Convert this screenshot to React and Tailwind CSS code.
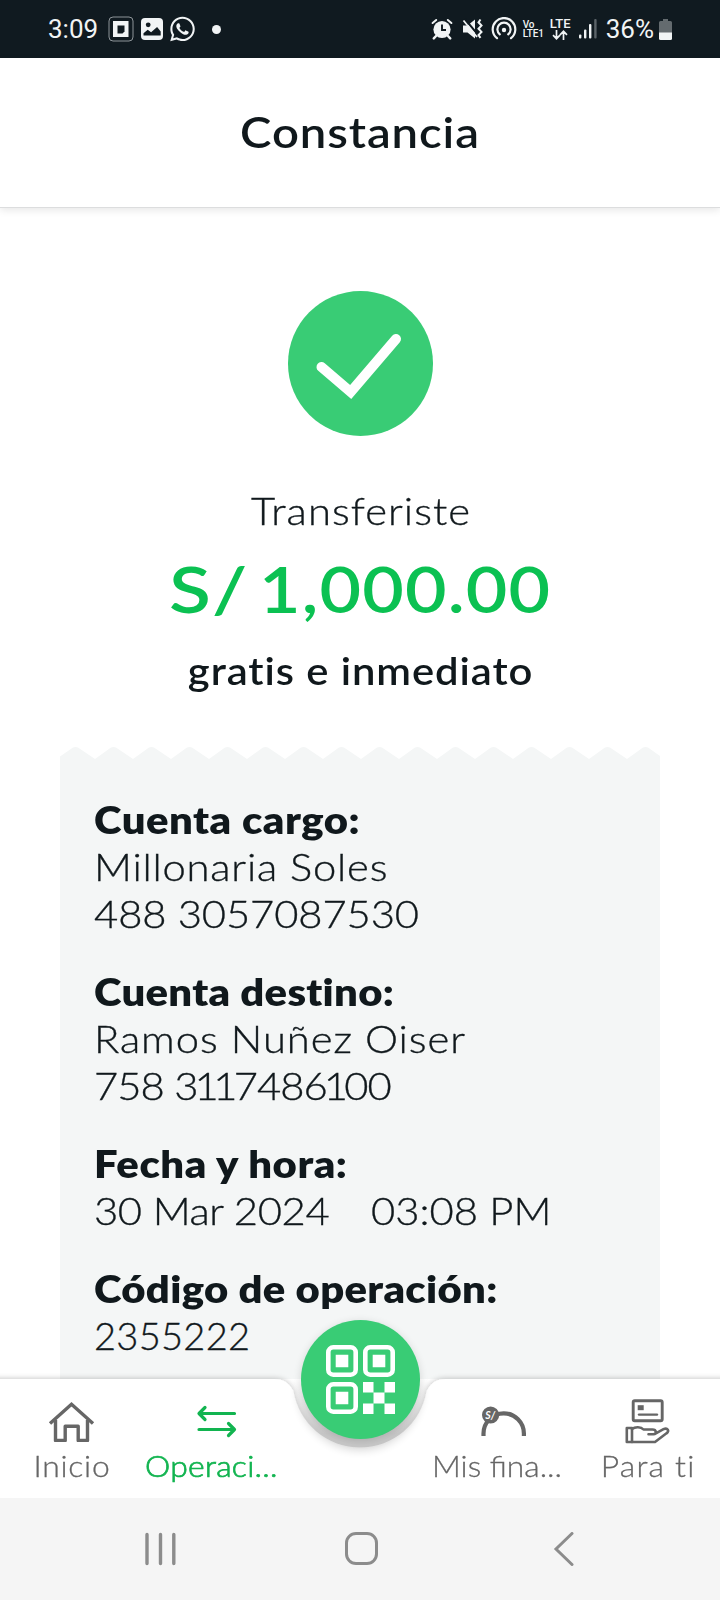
import React from 'react'
import { FaWhatsapp } from 'react-icons/fa'

const light = 'font-light text-[38px] [-webkit-text-stroke:0.35px] whitespace-pre'
const bold = 'font-extrabold text-[38px] leading-[48px] whitespace-pre origin-left scale-x-[1.1]'
const wide = 'origin-left scale-x-[1.1] leading-[47px]'

function StatusBar() {
  return (
    <div className="flex h-[58px] shrink-0 items-center bg-[#101a20] pl-[48px] pr-[48px] font-['Roboto',sans-serif] text-[#f1f4f5]">
      <span className="w-[60px] text-[26px] leading-none">3:09</span>
      <svg className="h-[26px] w-[26px]" viewBox="0 0 26 26" fill="none">
        <rect x="1" y="1" width="24" height="24" rx="4" stroke="#8d9498" strokeWidth="1" />
        <rect x="5" y="5" width="15.5" height="16" fill="#f1f4f5" />
        <path d="M9.5 9.5h7v6l-2 2h-5z" fill="#101a20" />
      </svg>
      <svg className="ml-[7px] h-[22px] w-[22px]" viewBox="0 0 22 22">
        <rect width="22" height="22" rx="4" fill="#f1f4f5" />
        <circle cx="7.2" cy="6.8" r="2.4" fill="#101a20" />
        <path d="M2.5 17.5v-2.2l4.2-3.6 3.4 2.6 6-5.3 3.6 4.5v4z" fill="#101a20" />
      </svg>
      <FaWhatsapp className="ml-[6px] h-[28px] w-[27px]" />
      <span className="ml-[16px] h-[9px] w-[9px] rounded-full bg-[#f1f4f5]" />
      <div className="ml-auto flex items-center">
        <svg className="h-[22px] w-[22px]" viewBox="0 0 22 22" fill="none" stroke="#f1f4f5" strokeLinecap="round">
          <circle cx="11" cy="11.5" r="8.6" fill="#f1f4f5" stroke="none" />
          <path d="M1.6 5L5.2 2M20.4 5L16.8 2" strokeWidth="2" />
          <path d="M5 18l-2.2 2.4M17 18l2.2 2.4" strokeWidth="2.4" />
          <path d="M11 6.5v5.5h4" stroke="#101a20" strokeWidth="1.9" strokeLinecap="butt" />
        </svg>
        <svg className="ml-[9px] h-[22px] w-[22px]" viewBox="0 0 22 22" fill="none">
          <path d="M1 7.5h4.5L13 1.5v19l-7.5-6H1z" fill="#f1f4f5" />
          <path d="M2.500 0.500L17 18" stroke="#101a20" strokeWidth="2" />
          <path d="M1.5 2.5L15 19" stroke="#f1f4f5" strokeWidth="1.8" />
          <path d="M18.5 1.5l-2 2.8 3 3.2-3 3.2 3 3.2-3 3.2 2 2.8" stroke="#f1f4f5" strokeWidth="2" />
        </svg>
        <svg className="ml-[7px] h-[24px] w-[26px]" viewBox="0 0 26 24" fill="none" stroke="#f1f4f5" strokeWidth="2.2" strokeLinecap="round">
          <path d="M6 21.2a11.3 11.3 0 1 1 14 0" />
          <path d="M8.8 17.4a6.6 6.6 0 1 1 8.4 0" />
          <circle cx="13" cy="13" r="2.2" fill="#f1f4f5" stroke="none" />
        </svg>
        <div className="ml-[6px] flex w-[22px] flex-col text-[10px] font-medium leading-[9px] tracking-[-0.1px]">
          <span>Vo</span>
          <span>LTE1</span>
        </div>
        <div className="ml-[4px] flex w-[23px] flex-col items-center">
          <span className="text-[13px] font-medium leading-[12px]">LTE</span>
          <svg className="h-[10px] w-[16px]" viewBox="0 0 16 10" fill="none" stroke="#f1f4f5" strokeWidth="1.7">
            <path d="M4.5 0v8.5M1 5.2l3.5 3.5L8 5.2M11.5 10V1.5M8 4.8l3.5-3.5L15 4.8" />
          </svg>
        </div>
        <svg className="ml-[7px] h-[20px] w-[18px]" viewBox="0 0 18 20" fill="#f1f4f5">
          <rect x="0" y="15.5" width="2.4" height="4" rx="1" />
          <rect x="5" y="10.5" width="2.4" height="9" rx="1" />
          <rect x="10" y="5" width="2.4" height="14.5" rx="1" />
          <rect x="15.2" y="0" width="2.4" height="19.5" rx="1" fill="#5b6368" />
        </svg>
        <span className="ml-[9px] text-[26px] leading-none">36%</span>
        <svg className="ml-[5px] h-[21px] w-[13px]" viewBox="0 0 13 21">
          <path d="M4 0h5v2h2.5a1.500 1.500 0 0 1 1.500 1.500V14H0V3.500A1.500 1.500 0 0 1 1.500 2H4z" fill="#646b6f" />
          <path d="M0 13.500h13v6a1.500 1.500 0 0 1-1.500 1.500h-10A1.500 1.500 0 0 1 0 19.500z" fill="#f1f4f5" />
        </svg>
      </div>
    </div>
  )
}

function Receipt() {
  return (
    <div className="mt-[53px] ml-[60px] w-[600px] flex-1">
      <svg className="block h-[13px] w-[600px]" viewBox="0 0 600 13" fill="#f4f6f6">
        <path d="M0 13V9.500L13 0.500Q15.500 -0.500 18 0.500L35 12L51 0.500Q53.500 -0.500 56 0.500L73 12L89 0.500Q91.500 -0.500 94 0.500L111 12L127 0.500Q129.500 -0.500 132 0.500L149 12L165 0.500Q167.500 -0.500 170 0.500L187 12L203 0.500Q205.500 -0.500 208 0.500L225 12L241 0.500Q243.500 -0.500 246 0.500L263 12L279 0.500Q281.500 -0.500 284 0.500L301 12L317 0.500Q319.500 -0.500 322 0.500L339 12L355 0.500Q357.500 -0.500 360 0.500L377 12L393 0.500Q395.500 -0.500 398 0.500L415 12L431 0.500Q433.500 -0.500 436 0.500L453 12L469 0.500Q471.500 -0.500 474 0.500L491 12L507 0.500Q509.500 -0.500 512 0.500L529 12L545 0.500Q547.500 -0.500 550 0.500L567 12L583 0.500Q585.500 -0.500 588 0.500L600 9V13Z" />
      </svg>
      <div className="flex h-full flex-col gap-[30px] bg-[#f4f6f6] pl-[34px] pt-[35px]">
        <div className="flex flex-col items-start">
          <span className={`${bold} tracking-[0.46px]`}>Cuenta cargo:</span>
          <span className={`${light} ${wide} tracking-[0.7px]`}>Millonaria Soles</span>
          <span className={`${light} ${wide} tracking-[-0.1px]`}>488 3057087530</span>
        </div>
        <div className="flex flex-col items-start">
          <span className={`${bold} tracking-[0.25px]`}>Cuenta destino:</span>
          <span className={`${light} ${wide} tracking-[0.82px]`}>Ramos Nuñez Oiser</span>
          <span className={`${light} ${wide} tracking-[-0.9px]`}>
            758 <span className="tracking-[-3.5px]">3</span><span className="tracking-[-5px]">1</span><span className="tracking-[-3.5px]">1</span>748<span className="tracking-[-3.5px]">61</span>00
          </span>
        </div>
        <div className="flex flex-col items-start">
          <span className={`${bold} tracking-[0.5px]`}>Fecha y hora:</span>
          <div className="flex">
            <div className="w-[277px]">
              <span className={`${light} ${wide} inline-block tracking-[-0.35px]`}>30 Mar 2024</span>
            </div>
            <span className={`${light} ${wide} tracking-[0px]`}>03:08 PM</span>
          </div>
        </div>
        <div className="flex flex-col items-start">
          <span className={`${bold} tracking-[0.28px]`}>Código de operación:</span>
          <span className={`${light} leading-[47px] tracking-[0.3px]`}>2355222</span>
        </div>
      </div>
    </div>
  )
}

const tabLabel = 'text-[29px] leading-[36px] whitespace-pre mt-[6px] font-light'
const barShape = 'M-20 0H274C284 0 289 4 293.4 12A67.5 67.5 0 0 0 426.600 12C431 4 436 0 446 0H740V119H-20Z'

function TabBar() {
  return (
    <div className="relative h-[119px] shrink-0">
      <svg className="absolute left-0 top-0 h-[119px] w-[720px] overflow-visible" viewBox="0 0 720 119">
        <defs>
          <linearGradient id="notch" x1="0" y1="0" x2="0" y2="1">
            <stop offset="0" stopColor="#c8c8c8" stopOpacity="0" />
            <stop offset="0.4" stopColor="#c8c8c8" stopOpacity="0.45" />
            <stop offset="0.8" stopColor="#c8c8c8" />
            <stop offset="1" stopColor="#c8c8c8" />
          </linearGradient>
          <filter id="bar-shadow" x="-5%" y="-20%" width="110%" height="140%">
            <feDropShadow dx="0" dy="-1" stdDeviation="2.500" floodColor="#000" floodOpacity="0.2" />
          </filter>
          <filter id="glow" x="-30%" y="-30%" width="160%" height="160%">
            <feGaussianBlur stdDeviation="5" />
          </filter>
          <clipPath id="bar-clip">
            <path d={barShape} />
          </clipPath>
        </defs>
        <path filter="url(#bar-shadow)" fill="#fff" d={barShape} />
        <g clipPath="url(#bar-clip)">
          <circle cx="360" cy="9" r="62" fill="#000" opacity="0.16" filter="url(#glow)" />
        </g>
        <path fill="url(#notch)" d="M274 0C284 0 289 4 293.4 12A67.5 67.5 0 0 0 426.600 12C431 4 436 0 446 0Z" />
      </svg>
      <div className="relative grid h-full grid-cols-5 bg-transparent pt-[15px] text-[#666]">
        <div className="flex flex-col items-center">
          <svg className="h-[48px] w-[48px]" viewBox="0 0 48 48" fill="none" stroke="#666" strokeWidth="3.400" strokeLinejoin="round">
            <path d="M2 29.500L23.500 10.200L45 29.500" strokeLinejoin="miter" />
            <path d="M7.500 26V46.500H17.200V32.300H30.200V46.500H39.500V26" />
          </svg>
          <span className={`${tabLabel} scale-x-[1.1] tracking-[0.65px] [-webkit-text-stroke:0.3px]`}>Inicio</span>
        </div>
        <div className="flex flex-col pl-[1px] text-[#12b450]">
          <svg className="h-[48px] w-[48px] self-center" viewBox="0 0 48 48" fill="none" stroke="#12b450" strokeWidth="3.200" strokeLinecap="round" strokeLinejoin="round">
            <path d="M41.500 19.500H6.500M12 13.500L6 19.500L12 25.500" />
            <path d="M6 35.500H41M35.500 29.500L41.500 35.500L35.500 41.500" />
          </svg>
          <span className={`${tabLabel} origin-left scale-x-[1.1] tracking-[0.25px] [-webkit-text-stroke:0.7px]`}>Operaci...</span>
        </div>
        <div />
        <div className="flex flex-col">
          <svg className="h-[48px] w-[48px] self-center" viewBox="0 0 48 48" fill="none">
            <path d="M3.500 42v-2.500A20.200 20.200 0 0 1 43.900 39.500V42" stroke="#666" strokeWidth="4.200" />
            <circle cx="10.600" cy="21" r="8.600" fill="#666" />
            <text x="5.300" y="24.800" fill="#fff" fontSize="10.500" fontWeight="700" fontStyle="italic" fontFamily="Lato, sans-serif">S/</text>
          </svg>
          <span className={`${tabLabel} origin-left scale-x-[1.095] [-webkit-text-stroke:0.3px]`}>Mis fina...</span>
        </div>
        <div className="flex flex-col items-center">
          <svg className="h-[48px] w-[48px] overflow-visible" viewBox="0 0 48 48" fill="none" stroke="#666" strokeWidth="2.900" strokeLinejoin="round" strokeLinecap="round">
            <rect x="9.200" y="6.700" width="29" height="20" rx="1.500" />
            <rect x="13.700" y="11.200" width="6" height="5" fill="#666" stroke="none" />
            <path d="M15 20.600H33" strokeWidth="2.400" />
            <path d="M2.800 34H8V48H2.800Z" strokeWidth="2.600" />
            <path d="M8 35C11 32.500 17 32.500 19.500 35.500H28.500C32.500 35.500 33 40 29.500 40.300H24.500M31 39.800L39.500 35.200C43.500 33.200 46 37 42.500 39.300L31 48H8" strokeWidth="2.600" />
          </svg>
          <span className={`${tabLabel} scale-x-[1.1] tracking-[1.1px] [-webkit-text-stroke:0.3px]`}>Para ti</span>
        </div>
      </div>
      <button className="absolute left-[301px] top-[-59px] flex h-[119px] w-[119px] items-center justify-center rounded-full bg-[#39cc75] shadow-[0_2px_8px_rgba(0,0,0,0.14)]">
        <svg className="h-[69px] w-[69px]" viewBox="0 0 69 69" fill="none" stroke="#fff" strokeWidth="4.600">
          <rect x="2.300" y="2.300" width="27.400" height="27.400" rx="5" />
          <rect x="39.300" y="2.300" width="27.400" height="27.400" rx="5" />
          <rect x="2.300" y="39.300" width="27.400" height="27.400" rx="5" />
          <path stroke="none" fill="#fff" d="M9.700 9.700h12.600v12.600H9.700zM46.700 9.700h12.600v12.600H46.700zM9.700 46.700h12.600v12.600H9.700zM37 37h10.500v10.500H37zM58.500 37H69v10.500H58.500zM47.500 47.500h11v11h-11zM37 58.500h10.500V69H37zM58.500 58.500H69V69H58.500z" />
        </svg>
      </button>
    </div>
  )
}

export default function App() {
  return (
    <div className="flex h-[1600px] w-[720px] flex-col overflow-hidden bg-white font-['Lato',sans-serif] text-[#10181c]">
      <StatusBar />
      <header className="relative flex h-[149px] shrink-0 items-center justify-center pb-[2px] shadow-[0_1px_0_#dcddde,0_3px_8px_rgba(0,0,0,0.1)]">
        <h1 className="scale-x-[1.1] text-[43px] font-semibold leading-none tracking-[0.8px]">Constancia</h1>
      </header>
      <main className="flex min-h-0 flex-1 flex-col overflow-hidden">
        <svg className="mt-[84px] ml-[1px] h-[145px] w-[145px] shrink-0 self-center" viewBox="0 0 145 145" fill="none">
          <circle cx="72.500" cy="72.500" r="72.500" fill="#39cc75" />
          <path d="M33.500 76L62.700 101L108 48" stroke="#fff" strokeWidth="10" strokeLinecap="round" strokeLinejoin="miter" />
        </svg>
        <p className={`${light} mt-[50px] scale-x-[1.1] pl-[2px] text-center leading-[48px] tracking-[0.95px]`}>Transferiste</p>
        <p className="mt-[15px] flex pl-[169px] text-[64px] font-semibold leading-[80px] text-[#0bc152]">
          <span className="w-[90px] origin-left scale-x-[1.2] tracking-[1px]">S/</span>
          <span className="origin-left scale-x-[1.12] tracking-[1.05px]">1,000.00</span>
        </p>
        <p className="mt-[17px] scale-x-[1.1] pl-[1px] text-center text-[38px] font-semibold leading-[48px] tracking-[0.83px]">gratis e inmediato</p>
        <Receipt />
      </main>
      <TabBar />
      <nav className="relative flex h-[102px] shrink-0 items-center justify-between bg-[#f5f5f5] pl-[144px] pr-[140px]">
        <svg className="h-[34px] w-[32px]" viewBox="0 0 32 34" stroke="#8c8c8c" strokeWidth="3.400" strokeLinecap="round">
          <path d="M3 2.500V31.500M16.500 2.500V31.500M29.800 2.500V31.500" />
        </svg>
        <svg className="h-[34px] w-[34px]" viewBox="0 0 34 34" fill="none" stroke="#8c8c8c" strokeWidth="3">
          <rect x="1.500" y="1.500" width="30" height="30" rx="9.500" />
        </svg>
        <svg className="h-[34px] w-[32px]" viewBox="0 0 32 34" fill="none" stroke="#8c8c8c" strokeWidth="3" strokeLinecap="round">
          <path d="M24 1.500L8 17L24 32.500" />
        </svg>
      </nav>
    </div>
  )
}
